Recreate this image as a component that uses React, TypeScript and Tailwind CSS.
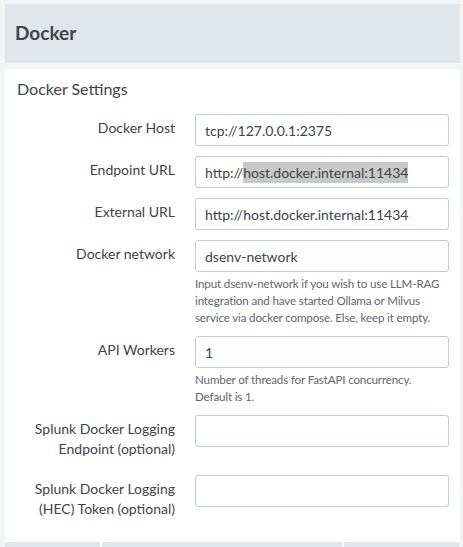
import { ReactNode } from "react"

interface IFieldRowProps {
  label: ReactNode
  value?: ReactNode
  help?: ReactNode
  multiline?: boolean
}

const FieldRow = ({ label, value, help, multiline }: IFieldRowProps) => {
  return (
    <div className="flex gap-5">
      <div
        className={
          multiline
            ? "w-[170px] shrink-0 text-right text-[14px]/[20px] text-[#3c444d] pt-[4px] pb-[6px]"
            : "w-[170px] shrink-0 text-right text-[14px]/[20px] text-[#3c444d] pt-[4px]"
        }
      >
        {label}
      </div>
      <div className="flex-1 min-w-0">
        <div className="h-[32px] w-[254px] rounded-[3px] border border-[#c3cbd4] bg-white px-[9px] flex items-center text-[14px] text-[#3c444d] whitespace-nowrap">
          {value}
        </div>
        {help && (
          <p className="mt-[3px] w-[260px] text-[11.6px]/[17px] tracking-[-0.15px] text-[#5c6773]">
            {help}
          </p>
        )}
      </div>
    </div>
  )
}

export default function App() {
  return (
    <div className="w-[463px] h-[547px] overflow-hidden bg-[#f2f4f5] pt-[4px] pl-[5px] pr-[3px] font-['Lato','Liberation_Sans',sans-serif]">
      <div className="h-[59px] bg-[#e1e6ea] flex items-center px-[10px]">
        <h1 className="text-[19px] font-bold text-[#3c444d]">Docker</h1>
      </div>
      <div className="mt-[6px] bg-white pl-0 pr-[10px] pt-[10px] pb-[17px]">
        <h2 className="pl-[12px] text-[16px]/[20px] text-[#3c444d] mb-[15px]">Docker Settings</h2>
        <div className="flex flex-col gap-[10px]">
          <FieldRow label="Docker Host" value="tcp://127.0.0.1:2375" />
          <FieldRow
            label="Endpoint URL"
            value={
              <>
                http://<span className="bg-[#c8c8c8]">host.docker.internal:11434</span>
              </>
            }
          />
          <FieldRow label="External URL" value="http://host.docker.internal:11434" />
          <FieldRow
            label="Docker network"
            value="dsenv-network"
            help="Input dsenv-network if you wish to use LLM-RAG integration and have started Ollama or Milvus service via docker compose. Else, keep it empty."
          />
          <FieldRow
            label="API Workers"
            value="1"
            help={
              <>
                Number of threads for FastAPI concurrency.
                <br />
                Default is 1.
              </>
            }
          />
          <FieldRow
            multiline
            label={
              <>
                Splunk Docker Logging
                <br />
                Endpoint (optional)
              </>
            }
          />
          <FieldRow
            multiline
            label={
              <>
                Splunk Docker Logging
                <br />
                (HEC) Token (optional)
              </>
            }
          />
        </div>
      </div>
      <div className="h-[8px] bg-[#e1e6ea] flex mr-[1px]">
        <div className="w-[97px] border-r-2 border-white" />
        <div className="w-[242px] border-r-2 border-white" />
      </div>
    </div>
  )
}
